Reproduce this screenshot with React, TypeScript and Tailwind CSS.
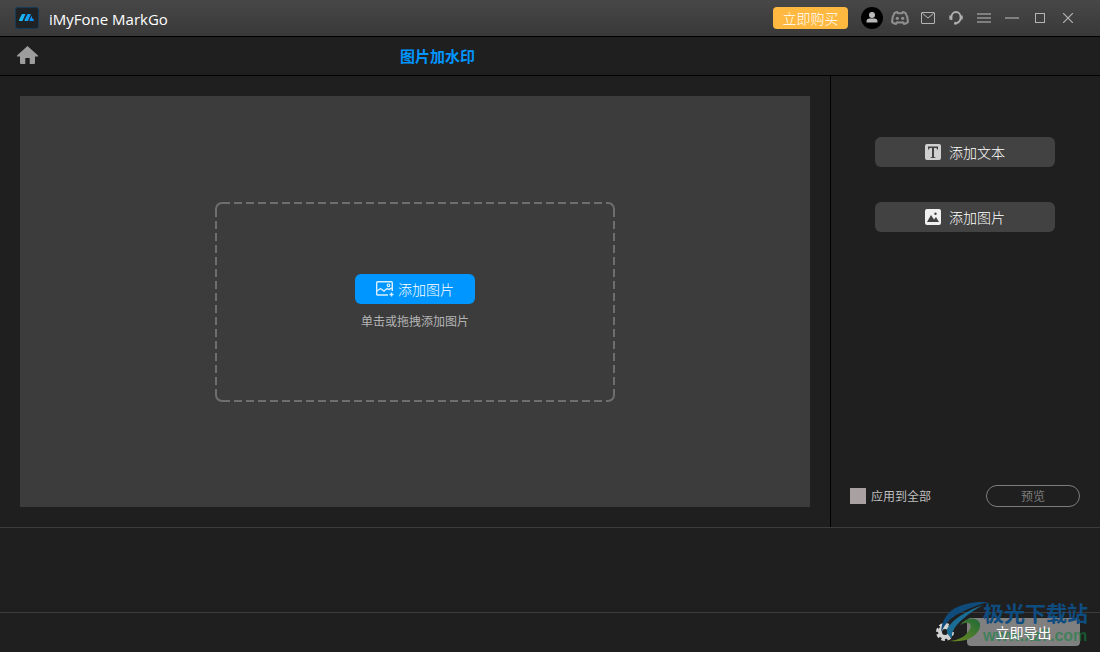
import React, { useState } from "react";

function Logo() {
  return (
    <svg width="24" height="22" viewBox="0 0 24 22" aria-hidden="true">
      <defs>
        <linearGradient id="logoFill" gradientUnits="userSpaceOnUse" x1="4" y1="0" x2="19" y2="0">
          <stop offset="0" stopColor="#1cc4f5" />
          <stop offset="1" stopColor="#0f86f5" />
        </linearGradient>
      </defs>
      <rect x="0.5" y="0.5" width="23" height="21" rx="2.5" fill="#1f2224" stroke="#173a57" />
      <g fill="url(#logoFill)">
        <path d="M7 7h3.500L7.500 14H4q0-1.500 1-3z" />
        <path d="M12.500 7H16l-3 7H9.500q0-1.500 1-3z" />
        <path d="M17 8.500V11q2 .5 2 3h-4.500q0-1 .7-2.500z" />
      </g>
    </svg>
  );
}

function HomeIcon() {
  return (
    <svg width="21" height="18" viewBox="0 0 21 18" fill="#9d9d9d" aria-hidden="true">
      <path d="M10.5 0 21 9.600v.9h-3V17q0 1-1 1h-4.300v-6H8.300v6H4q-1 0-1-1v-6.500H0v-.9z" />
    </svg>
  );
}

function UserIcon() {
  return (
    <svg width="22" height="22" viewBox="0 0 22 22" aria-hidden="true">
      <circle cx="11" cy="11" r="11" fill="#000" />
      <circle cx="11" cy="8" r="3" fill="#b9b9b9" />
      <path d="M5.5 15.5v-1q0-3 3.200-3h4.600q3.200 0 3.200 3v1z" fill="#b9b9b9" />
    </svg>
  );
}

function DiscordIcon() {
  return (
    <svg width="18" height="14" viewBox="0 0 18 14" fill="none" stroke="#8f8f8f" aria-hidden="true">
      <path
        d="M6.200 1 3.500 2Q1 6 1 11q1.500 1.600 4 2l1-1.800q3 .7 6 0L13 13q2.500-.4 4-2 0-5-2.500-9l-2.700-1-.8 1.300H7z"
        strokeWidth="2"
        strokeLinejoin="round"
      />
      <circle cx="6.300" cy="7.300" r="1.600" fill="#8f8f8f" stroke="none" />
      <circle cx="11.700" cy="7.300" r="1.600" fill="#8f8f8f" stroke="none" />
    </svg>
  );
}

function MailIcon() {
  return (
    <svg width="14" height="12" viewBox="0 0 14 12" fill="none" stroke="#b4b4b4" aria-hidden="true">
      <rect x="0.5" y="0.5" width="13" height="11" rx="0.5" />
      <path d="m1.500 1.500 5.500 4.500 5.500-4.500" />
    </svg>
  );
}

function SupportIcon() {
  return (
    <svg width="14" height="14" viewBox="0 0 14 14" fill="none" stroke="#b0b0b0" aria-hidden="true">
      <path d="M2.500 9V6a4.500 5 0 0 1 9 0v2q-.8 3.300-4 4.200" strokeWidth="1.800" />
      <path d="M1.500 4.500v4M12.500 4.500v4" strokeWidth="2.400" />
      <circle cx="6.500" cy="12.300" r="1.500" fill="#b0b0b0" stroke="none" />
    </svg>
  );
}

function MenuIcon() {
  return (
    <svg width="14" height="10" viewBox="0 0 14 10" fill="#808080" aria-hidden="true">
      <path d="M0 0h14v2H0zM0 4h14v2H0zM0 8h14v2H0z" />
    </svg>
  );
}

function MinimizeIcon() {
  return (
    <svg width="14" height="12" viewBox="0 0 14 12" fill="#808080" aria-hidden="true">
      <path d="M0 5h14v2H0z" />
    </svg>
  );
}

function MaximizeIcon() {
  return (
    <svg width="10" height="10" viewBox="0 0 10 10" fill="none" stroke="#b4b4b4" aria-hidden="true">
      <rect x="0.5" y="0.5" width="9" height="9" />
    </svg>
  );
}

function CloseIcon() {
  return (
    <svg width="10" height="10" viewBox="0 0 10 10" fill="none" stroke="#b4b4b4" aria-hidden="true">
      <path d="m0 0 10 10M10 0 0 10" strokeWidth="1.200" />
    </svg>
  );
}

function AddImageIcon() {
  return (
    <svg width="18" height="16" viewBox="0 0 18 16" fill="none" stroke="#d9efff" aria-hidden="true">
      <path d="M12 14H1.700a1 1 0 0 1-1-1V1.700a1 1 0 0 1 1-1h13.600a1 1 0 0 1 1 1V10" strokeWidth="1.400" />
      <path d="m1 10 3.500-2.500L8 10l3-2.500 2 1 3-1.500" strokeWidth="1.400" />
      <circle cx="12.500" cy="4.300" r="1.300" strokeWidth="1.200" />
      <path d="M15.500 11.500v4M13.500 13.500h4" strokeWidth="1.400" />
    </svg>
  );
}

function TextIcon() {
  return (
    <svg width="16" height="16" viewBox="0 0 16 16" aria-hidden="true">
      <rect width="16" height="16" rx="2" fill="#d0d0d0" />
      <path d="M3 2.500h10v3h-1L11.500 4H9v9l1.500.5v.5h-5v-.5L7 13V4H4.500L4 5.500H3z" fill="#424242" />
    </svg>
  );
}

function PictureIcon() {
  return (
    <svg width="16" height="16" viewBox="0 0 16 16" aria-hidden="true">
      <rect width="16" height="16" rx="2" fill="#f0f0f0" />
      <path d="M2 13 6 6l3 4.500L11 8l3 5z" fill="#424242" />
      <circle cx="10.500" cy="4.800" r="1.200" fill="#424242" />
    </svg>
  );
}

function GearIcon() {
  return (
    <svg width="18" height="18" viewBox="0 0 18 18" fill="none" stroke="#d2d2d2" aria-hidden="true">
      <circle cx="9" cy="9" r="5" strokeWidth="4" />
      <circle cx="9" cy="9" r="7.600" strokeWidth="2.800" strokeDasharray="3.570 2.400" />
    </svg>
  );
}

function DropOutline() {
  return (
    <svg
      className="pointer-events-none absolute inset-0"
      width="400"
      height="200"
      viewBox="0 0 400 200"
      fill="none"
      stroke="#6e6e6e"
      strokeWidth="2"
      aria-hidden="true"
    >
      <path d="M7 1h386M7 199h386M1 7v186M399 7v186" strokeDasharray="8 4" />
      <path d="M1 7a6 6 0 0 1 6-6M393 1a6 6 0 0 1 6 6M399 193a6 6 0 0 1-6 6M7 199a6 6 0 0 1-6-6" />
    </svg>
  );
}

function Watermark() {
  return (
    <div className="pointer-events-none absolute right-3 bottom-2 flex items-end">
      <svg width="48" height="42" viewBox="0 0 48 42" aria-hidden="true">
        <defs>
          <linearGradient id="leafFill" x1="0" y1="1" x2="1" y2="0">
            <stop offset="0" stopColor="#6f8a1c" />
            <stop offset="1" stopColor="#1f6a3a" />
          </linearGradient>
        </defs>
        <path d="M0 30Q1 14 14 6 28-1 47 0 33 4 23 9 6 16 0 30z" fill="#0f4c7c" />
        <path d="M6 27Q14 13 42 3 24 13 15 24q-5 7-4 12-6-3-5-9z" fill="#1b6c94" />
        <path d="M9 39q12-1 18-9 5-6 1-9-4-1-9 2 7-8 15-6 8 3 4 11-8 13-29 11z" fill="url(#leafFill)" />
      </svg>
      <div className="-ml-1.5 flex flex-col gap-1">
        <span className="text-[21px] leading-6 font-bold text-[#0f4c80]">极光下载站</span>
        <span className="font-['Liberation_Sans'] text-base leading-4 font-bold text-[#148040]/60">
          www.xz7.com
        </span>
      </div>
    </div>
  );
}

const toolbar = [
  { label: "账户", icon: <UserIcon /> },
  { label: "Discord", icon: <DiscordIcon /> },
  { label: "邮件", icon: <MailIcon /> },
  { label: "客服", icon: <SupportIcon /> },
  { label: "菜单", icon: <MenuIcon /> },
  { label: "最小化", icon: <MinimizeIcon /> },
  { label: "最大化", icon: <MaximizeIcon /> },
  { label: "关闭", icon: <CloseIcon /> },
];

export default function App() {
  const [applyAll, setApplyAll] = useState(false);

  return (
    <div className="relative flex min-h-screen flex-col bg-[#1f1f1f] font-['Noto_Sans_CJK_SC',sans-serif] text-white">
      <header className="flex h-[37px] items-center border-b border-black bg-linear-to-b from-[#474747] to-[#393939] pr-[18px] pl-[15px]">
        <Logo />
        <h1 className="ml-2.5 flex-1 pt-0.5 font-['Open_Sans',sans-serif] text-[15px]">iMyFone MarkGo</h1>
        <button type="button" className="h-[22px] w-[75px] rounded bg-[#ffb940] text-sm leading-[22px] font-light">
          立即购买
        </button>
        <div className="ml-2.5 flex">
          {toolbar.map((item) => (
            <button
              key={item.label}
              type="button"
              aria-label={item.label}
              className="flex h-7 w-7 items-center justify-center"
            >
              {item.icon}
            </button>
          ))}
        </div>
      </header>

      <nav className="flex h-[39px] items-center border-b border-black">
        <button type="button" aria-label="首页" className="flex w-[45px] justify-center pb-0.5 pl-2.5">
          <HomeIcon />
        </button>
        <h2 className="flex-1 text-center text-[15px] font-bold text-[#0096ff]">图片加水印</h2>
        <div className="w-[270px]" />
      </nav>

      <main className="flex flex-1">
        <section className="flex flex-1 p-5">
          <div className="flex flex-1 items-center justify-center bg-[#3c3c3c]">
            <div className="relative flex h-[200px] w-[400px] flex-col items-center justify-center">
              <DropOutline />
              <button
                type="button"
                className="flex h-[30px] w-[120px] items-center justify-center gap-1 rounded-md bg-[#0096ff] text-sm font-light"
              >
                <AddImageIcon />
                添加图片
              </button>
              <p className="mt-2 text-xs leading-[18px] text-[#b4b4b4]">单击或拖拽添加图片</p>
            </div>
          </div>
        </section>

        <aside className="flex w-[270px] flex-col border-l border-black py-5 pr-5 pl-[19px]">
          <div className="mt-[41px] flex flex-col items-center gap-[35px]">
            <button
              type="button"
              className="flex h-[30px] w-[180px] items-center justify-center gap-2 rounded-md bg-[#424242] text-sm font-light"
            >
              <TextIcon />
              添加文本
            </button>
            <button
              type="button"
              className="flex h-[30px] w-[180px] items-center justify-center gap-2 rounded-md bg-[#424242] text-sm font-light"
            >
              <PictureIcon />
              添加图片
            </button>
          </div>
          <div className="mt-auto flex items-center justify-between">
            <label className="flex items-center gap-[5px] text-xs text-[#bebebe]">
              <input
                type="checkbox"
                checked={applyAll}
                onChange={(e) => setApplyAll(e.target.checked)}
                className="h-4 w-4 appearance-none bg-[#a9a0a2] checked:bg-[#0096ff]"
              />
              应用到全部
            </label>
            <button
              type="button"
              className="h-[22px] w-[94px] rounded-full border border-[#7d7d7d] text-xs text-[#7d7d7d]"
            >
              预览
            </button>
          </div>
        </aside>
      </main>

      <div className="h-[86px] border-y border-[#3c3c3c]" />

      <footer className="flex h-[39px] items-center justify-end gap-[13px] pr-5 pb-0.5">
        <button type="button" aria-label="设置">
          <GearIcon />
        </button>
        <button type="button" className="h-7 w-[113px] rounded bg-[#808080] text-sm">
          <span className="relative z-10">立即导出</span>
        </button>
      </footer>

      <Watermark />
    </div>
  );
}
